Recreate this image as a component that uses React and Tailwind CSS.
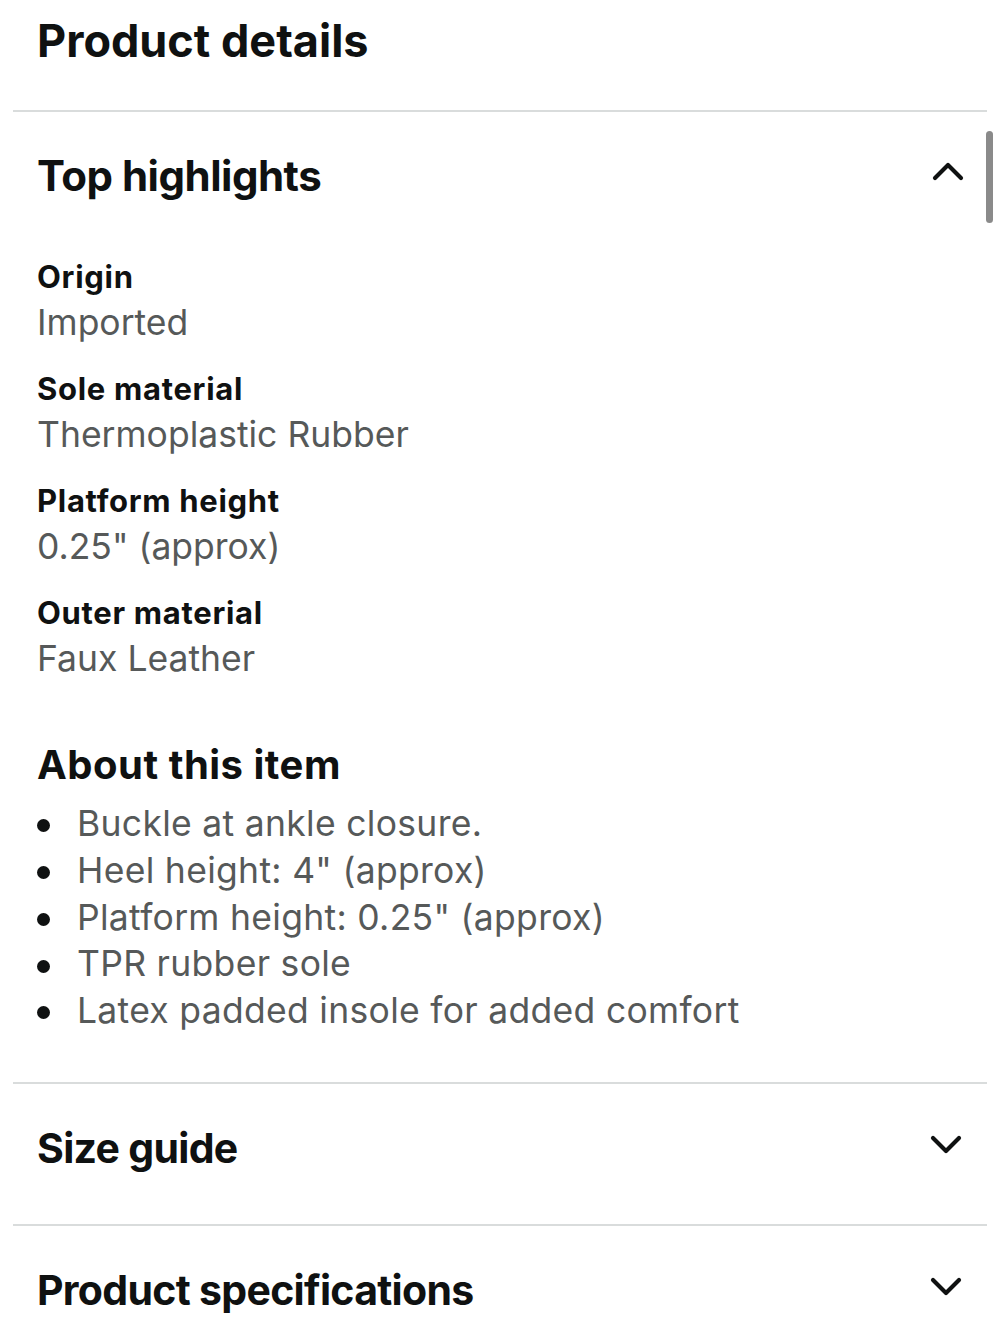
const highlights = [
  { label: 'Origin', value: 'Imported' },
  { label: 'Sole material', value: 'Thermoplastic Rubber' },
  { label: 'Platform height', value: '0.25" (approx)' },
  { label: 'Outer material', value: 'Faux Leather' },
]

const about = [
  'Buckle at ankle closure.',
  'Heel height: 4" (approx)',
  'Platform height: 0.25" (approx)',
  'TPR rubber sole',
  'Latex padded insole for added comfort',
]

function Chevron({ up, className }) {
  return (
    <svg viewBox="0 0 32 20" width="32" height="20" className={className} fill="none" stroke="#0f1111" strokeWidth="4.2" strokeLinecap="round" strokeLinejoin="round">
      {up ? <polyline points="3,17 16,4 29,17" /> : <polyline points="3,3 16,16 29,3" />}
    </svg>
  )
}

function Divider() {
  return <div className="mx-[13px] h-[2px] bg-[#d9dcdc]" />
}

function CollapsedRow({ title }) {
  return (
    <div className="flex h-[140px] items-start justify-between pl-[37px] pr-[38px] pt-[36px]">
      <h2 className="text-[41px] font-bold leading-[56px] tracking-[-0.7px] text-[#0f1111]">{title}</h2>
      <Chevron className="mt-[15px] shrink-0" />
    </div>
  )
}

export default function App() {
  return (
    <div className="relative min-h-[1333px] w-[1000px] bg-white" style={{ fontFamily: 'Inter, "Noto Sans", sans-serif' }}>
      {/* Header */}
      <div className="h-[110px] pl-[37px] pt-[13px]">
        <h1 className="text-[45px] font-bold leading-[56px] text-[#0f1111]">Product details</h1>
      </div>
      <Divider />

      {/* Top highlights */}
      <div className="flex items-start justify-between pl-[37px] pr-[36px] pt-[36px]">
        <h2 className="text-[42px] font-bold leading-[56px] tracking-[-0.5px] text-[#0f1111]">Top highlights</h2>
        <Chevron up className="mt-[13px] shrink-0" />
      </div>

      <div className="mt-[53px] flex flex-col gap-[23px] pl-[37px]">
        {highlights.map((h) => (
          <div key={h.label}>
            <div className="text-[31px] font-bold leading-[40px] tracking-[0.7px] text-[#0f1111]">{h.label}</div>
            <div className="mt-[2px] text-[35.5px] leading-[47px] text-[#565959]">{h.value}</div>
          </div>
        ))}
      </div>

      {/* About this item */}
      <div className="mt-[59px] pl-[37px]">
        <h2 className="text-[40px] font-bold leading-[48px] tracking-[0.5px] text-[#0f1111]">About this item</h2>
        <ul className="mt-[12px]">
          {about.map((a) => (
            <li key={a} className="flex items-center text-[35.5px] leading-[46.75px] tracking-[0.3px] text-[#565959]">
              <span className="mr-[27px] mt-[3px] h-[13px] w-[13px] shrink-0 rounded-full bg-[#0f1111]" />
              {a}
            </li>
          ))}
        </ul>
      </div>

      <div className="mt-[47px]">
        <Divider />
        <CollapsedRow title="Size guide" />
        <Divider />
        <CollapsedRow title="Product specifications" />
      </div>

      {/* scrollbar */}
      <div className="absolute left-[986px] top-[131px] h-[92px] w-[7px] rounded-full bg-[#8a8a8a]" />
    </div>
  )
}
